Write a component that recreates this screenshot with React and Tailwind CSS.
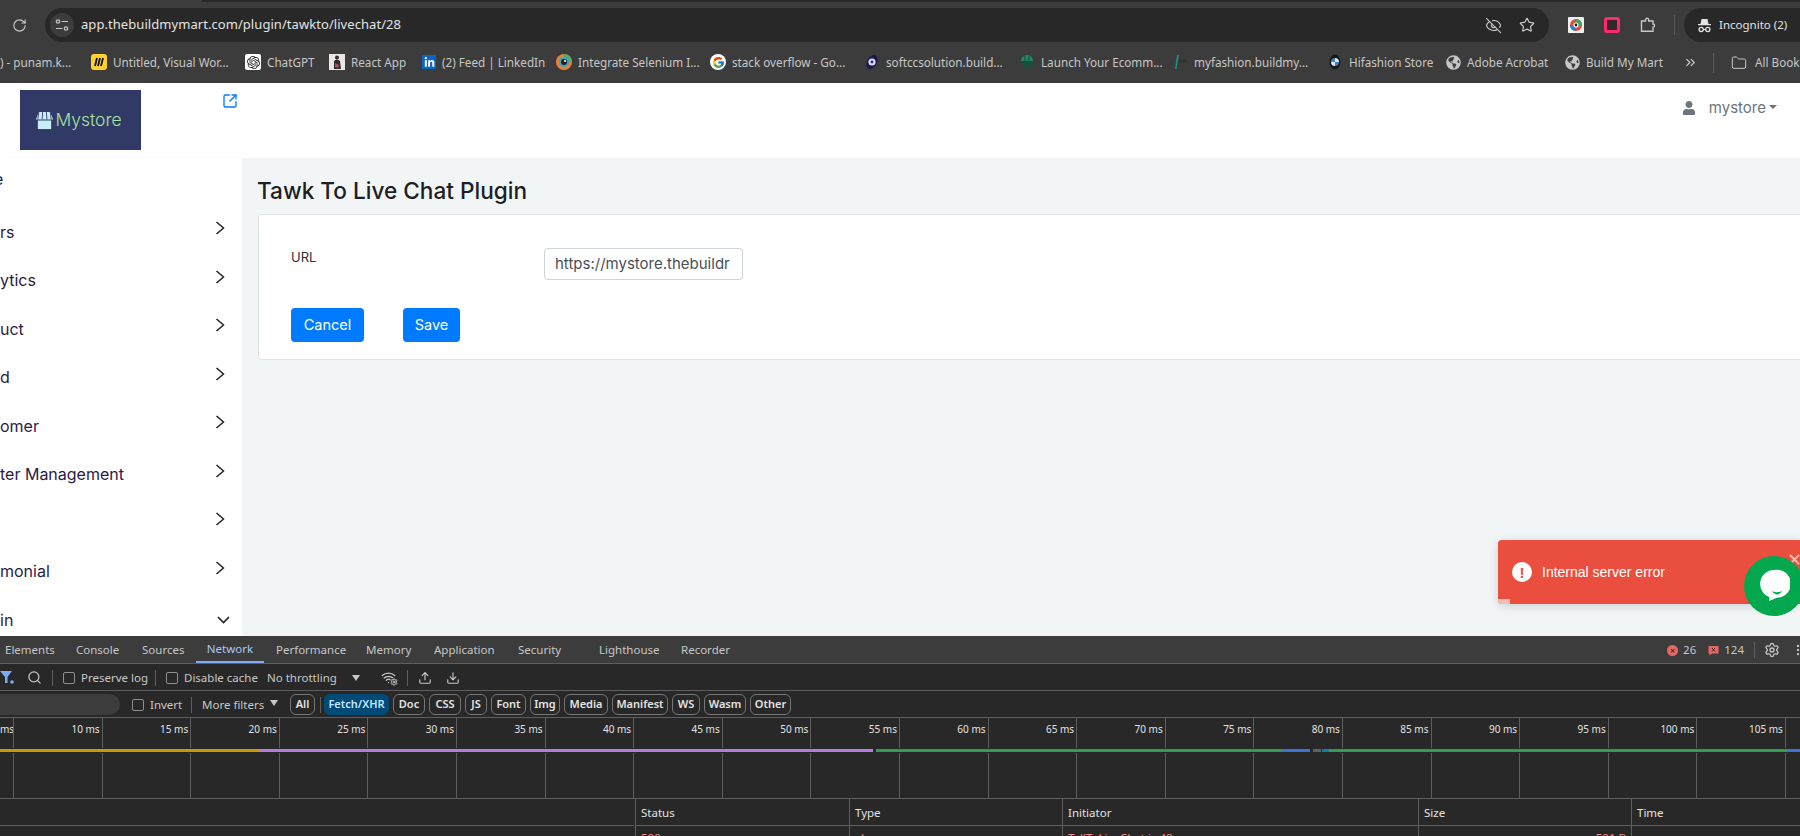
import React from 'react';
import {
  ChevronsRight,
  EyeOff,
  Folder,
  MoreVertical,
  RotateCw,
  Search,
  Settings,
  SquareArrowOutUpRight,
  Star,
  Upload,
  Download,
  Wifi,
} from 'lucide-react';
import { FaGlobeAmericas, FaLinkedinIn, FaUser } from 'react-icons/fa';
import { FcGoogle } from 'react-icons/fc';
import { SiOpenai } from 'react-icons/si';

const chromeFont = "font-['Noto_Sans',sans-serif]";
const pageFont = "font-['Inter',sans-serif]";

function Miro() {
  return (
    <svg width="16" height="16" viewBox="0 0 16 16">
      <rect width="16" height="16" rx="3" fill="#ffd02f" />
      <path d="M4 12 L6 4 M7 12 L9 4 M10 12 L12 4" stroke="#111" strokeWidth="1.8" />
    </svg>
  );
}

function OpenAi() {
  return (
    <span className="w-4 h-4 bg-white rounded-[2px] flex items-center justify-center">
      <SiOpenai size={13} color="#222" />
    </span>
  );
}

function Photo() {
  return (
    <svg width="16" height="16" viewBox="0 0 16 16">
      <rect width="16" height="16" fill="#e9e6e4" />
      <circle cx="8" cy="3.5" r="2" fill="#3a2a2a" />
      <path d="M5 7 Q8 4 11 7 L12 15 H5 Z" fill="#33292c" />
      <path d="M6 9 L10 11 L9 14 L6 13 Z" fill="#a3525c" />
    </svg>
  );
}

function LinkedIn() {
  return (
    <span className="w-[14px] h-[14px] bg-[#0a66c2] flex items-center justify-center">
      <FaLinkedinIn size={11} color="#fff" />
    </span>
  );
}

function Lens() {
  return (
    <svg width="16" height="16" viewBox="0 0 16 16">
      <circle cx="8" cy="8" r="8" fill="#e9803a" />
      <path d="M8 0 A8 8 0 0 1 16 8 L12 8 A4 4 0 0 0 8 4 Z" fill="#4fae6a" />
      <circle cx="8" cy="8" r="5" fill="#31a7c4" />
      <circle cx="8" cy="8" r="3" fill="#222" />
      <circle cx="9" cy="7" r="1" fill="#fff" />
    </svg>
  );
}

function Google() {
  return (
    <span className="w-4 h-4 bg-white rounded-full flex items-center justify-center">
      <FcGoogle size={13} />
    </span>
  );
}

function Swirl() {
  return (
    <svg width="16" height="16" viewBox="0 0 16 16">
      <ellipse cx="8" cy="8" rx="5" ry="7.5" fill="#1b1a4a" transform="rotate(30 8 8)" />
      <circle cx="8" cy="8" r="3.6" fill="#d8dcf5" />
      <circle cx="8" cy="8" r="1.4" fill="#2a2a7a" />
    </svg>
  );
}

function Basket() {
  return (
    <svg width="16" height="16" viewBox="0 0 16 16">
      <path d="M2 7 A6 6 0 0 1 14 7 Z" fill="#1f8a62" />
      <path d="M3 8 H13 L11 14 H5 Z" fill="#14523e" />
      <path d="M6 2 V7 M10 2 V7" stroke="#2f2f2f" strokeWidth="0.8" />
    </svg>
  );
}

function Fashion() {
  return (
    <svg width="16" height="16" viewBox="0 0 16 16">
      <path d="M5 1 L3 15 L4.5 15 L7 1 Z" fill="#1f8c8c" />
      <rect x="7" y="5.5" width="8" height="3" fill="#333" />
    </svg>
  );
}

function Bmw() {
  return (
    <svg width="16" height="16" viewBox="0 0 16 16">
      <ellipse cx="8" cy="8" rx="5.5" ry="7.5" fill="#16181c" />
      <path d="M8 4 A4 4 0 0 1 12 8 H8 Z M8 8 H4 A4 4 0 0 0 8 12 Z" fill="#dfe6ee" />
      <path d="M8 4 A4 4 0 0 0 4 8 H8 Z M8 8 H12 A4 4 0 0 1 8 12 Z" fill="#3f7fc1" />
    </svg>
  );
}

function Globe() {
  return <FaGlobeAmericas size={15} color="#c7c7c7" />;
}

const bookmarks = [
  { label: ') - punam.k...', cls: 'w-[91px]' },
  { label: 'Untitled, Visual Wor...', icon: <Miro />, cls: 'w-[154px]' },
  { label: 'ChatGPT', icon: <OpenAi />, cls: 'w-[84px]' },
  { label: 'React App', icon: <Photo />, cls: 'w-[93px]' },
  { label: '(2) Feed | LinkedIn', icon: <LinkedIn />, cls: 'w-[134px]' },
  { label: 'Integrate Selenium I...', icon: <Lens />, cls: 'w-[154px]' },
  { label: 'stack overflow - Go...', icon: <Google />, cls: 'w-[154px]' },
  { label: 'softccsolution.build...', icon: <Swirl />, cls: 'w-[155px]' },
  { label: 'Launch Your Ecomm...', icon: <Basket />, cls: 'w-[153px]' },
  { label: 'myfashion.buildmy...', icon: <Fashion />, cls: 'w-[155px]' },
  { label: 'Hifashion Store', icon: <Bmw />, cls: 'w-[119px]' },
  { label: 'Adobe Acrobat', icon: <Globe />, cls: 'w-[119px]' },
  { label: 'Build My Mart', icon: <Globe />, cls: 'w-[118px]' },
];

function BrowserBar() {
  return (
    <div className={`${chromeFont} shrink-0`}>
      <div className="flex h-[2px] bg-[#3c3c3c]">
        <div className="w-[202px]" />
        <div className="flex-1 bg-[#282828]" />
      </div>
      <div className="flex items-center h-[40px] pt-[6px] bg-[#3c3c3c] text-[#e3e3e3]">
        <div className="w-[26px] shrink-0 flex justify-center ml-[1px]">
          <RotateCw size={15} color="#c7c7c7" strokeWidth={1.8} className="ml-[10px]" />
        </div>
        <div className="ml-[18px] flex items-center h-[34px] w-[1504px] shrink-0 bg-[#282828] rounded-full">
          <span className="ml-[5px] w-[24px] h-[24px] rounded-full bg-[#3c3c3c] flex items-center justify-center">
            <svg width="14" height="14" viewBox="0 0 14 14" fill="none" stroke="#c7c7c7" strokeWidth="1.2">
              <circle cx="3" cy="3.5" r="1.7" />
              <path d="M6.5 3.5 H13 M1 10.5 H7.5" />
              <circle cx="11" cy="10.5" r="1.7" />
            </svg>
          </span>
          <span className="ml-[7px] text-[13px] text-[#e3e3e3] tracking-[0.06px]">app.thebuildmymart.com/plugin/tawkto/livechat/28</span>
          <div className="ml-auto flex items-center gap-[17px] pr-[14px]">
            <EyeOff size={17} color="#c7c7c7" strokeWidth={1.6} />
            <Star size={16} color="#c7c7c7" strokeWidth={1.8} />
          </div>
        </div>
        <div className="ml-[19px] flex items-center w-[107px] shrink-0">
          <svg width="16" height="16" viewBox="0 0 16 16">
            <rect width="16" height="16" rx="1" fill="#eef2f2" />
            <circle cx="8" cy="8" r="6" fill="#e94b35" />
            <path d="M8 2 A6 6 0 0 1 14 8 L8 8 Z" fill="#3ba55c" />
            <path d="M8 14 A6 6 0 0 1 2 8 L8 8 Z" fill="#2a7fd5" />
            <circle cx="8" cy="8" r="2.6" fill="#fff" />
            <circle cx="8" cy="8" r="1.4" fill="#222" />
          </svg>
          <span className="ml-[20px] w-[16px] h-[16px] rounded-[3px] border-[3px] border-[#ff2a6d] bg-[#33262c]" />
          <svg className="ml-[20px]" width="17" height="16" viewBox="0 0 17 16" fill="none" stroke="#c7c7c7" strokeWidth="1.4">
            <path d="M1.5 4 H5.5 V2.8 A1.6 1.6 0 0 1 8.7 2.8 V4 H13 V7 A1.6 1.6 0 0 1 13 10.2 V14.3 H1.5 Z" />
          </svg>
        </div>
        <span className="w-px h-[20px] bg-[#5a5a5a] shrink-0 -ml-[1px]" />
        <div className="ml-[9px] flex items-center h-[34px] flex-1 bg-[#282828] rounded-l-full">
          <svg className="ml-[13px]" width="15" height="15" viewBox="0 0 15 15" fill="#e3e3e3">
            <path d="M4.5 1 H10.5 L11.5 6 H14 V7.2 H1 V6 H3.5 Z" />
            <circle cx="4.2" cy="11.5" r="2.1" fill="none" stroke="#e3e3e3" strokeWidth="1.3" />
            <circle cx="10.8" cy="11.5" r="2.1" fill="none" stroke="#e3e3e3" strokeWidth="1.3" />
            <path d="M6.3 11.5 H8.7" stroke="#e3e3e3" strokeWidth="1" />
          </svg>
          <span className="ml-[7px] text-[11.5px] text-[#e3e3e3] whitespace-nowrap">Incognito (2)</span>
        </div>
      </div>
      <div className="flex items-center h-[41px] bg-[#3c3c3c] text-[#c7c7c7] text-[11.7px] whitespace-nowrap overflow-hidden">
        {bookmarks.map((b) => (
          <div key={b.label} className={`${b.cls} shrink-0 flex items-center gap-[6px]`}>
            {b.icon}
            <span>{b.label}</span>
          </div>
        ))}
        <ChevronsRight size={15} color="#c7c7c7" className="shrink-0" />
        <span className="ml-[15px] w-px h-[20px] bg-[#5a5a5a] shrink-0" />
        <Folder size={16} color="#c7c7c7" strokeWidth={1.5} className="ml-[17px] shrink-0" />
        <span className="ml-[8px]">All Bookmarks</span>
      </div>
    </div>
  );
}

const navItems = [
  { label: 'e', cls: 'h-[50px] pb-[8px] -ml-[6px]', plain: true },
  { label: 'rs', cls: 'h-[48.5px]' },
  { label: 'ytics', cls: 'h-[48.5px]' },
  { label: 'uct', cls: 'h-[48.5px]' },
  { label: 'd', cls: 'h-[48.5px]' },
  { label: 'omer', cls: 'h-[48.5px]' },
  { label: 'ter Management', cls: 'h-[48.5px]' },
  { label: '', cls: 'h-[48.5px]' },
  { label: 'monial', cls: 'h-[48.5px]' },
];

function Sidebar() {
  return (
    <div className="w-[242px] shrink-0 bg-white overflow-hidden shadow-[2px_0_6px_rgba(0,0,0,0.03)] text-[16px] text-[#2b1a48]">
      {navItems.map((item) => (
        <div key={item.label + item.cls} className={`${item.cls} flex items-center justify-between pr-[17px]`}>
          <span className="mb-[1px]">{item.label}</span>
          {!item.plain && (
            <svg className="mb-[8px]" width="10" height="14" viewBox="0 0 10 14" fill="none" stroke="#222" strokeWidth="1.5">
              <path d="M1.5 1 L8.5 7 L1.5 13" />
            </svg>
          )}
        </div>
      ))}
      <div className="flex items-center justify-between pr-[12px] h-[40px] pt-[8px]">
        <span>in</span>
        <svg width="13" height="8" viewBox="0 0 13 8" fill="none" stroke="#222" strokeWidth="1.6">
          <path d="M1 1 L6.5 6.5 L12 1" />
        </svg>
      </div>
    </div>
  );
}

function PageArea() {
  return (
    <div className={`${pageFont} flex-1 min-h-0 flex flex-col bg-white overflow-hidden`}>
      <div className="h-[75px] shrink-0 flex items-start">
        <div className="ml-[20px] mt-[7px] w-[121px] h-[60px] pr-[4px] bg-[#313a66] flex items-center justify-center gap-[1px]">
          <svg width="19" height="19" viewBox="0 0 20 20">
            <path d="M4 1 H16 L19 9 H1 Z" fill="#c8eef5" />
            <path d="M4 1 L3 9 M8 1 L7.5 9 M12 1 L12.5 9 M16 1 L17 9" stroke="#313a66" strokeWidth="0.9" />
            <rect x="3" y="10" width="14" height="9" fill="#c8eef5" />
          </svg>
          <span className="text-[17.5px] font-light text-[#a6e3a1] leading-none">Mystore</span>
        </div>
        <SquareArrowOutUpRight size={16} color="#007bff" strokeWidth={2} className="ml-[81px] mt-[10px]" />
        <div className="ml-auto mr-[23px] mt-[14px] flex items-center text-[15px] text-[#6c757d]">
          <FaUser size={14} color="#6c757d" />
          <span className="ml-[13px]">mystore</span>
          <span className="ml-[3px] mb-[2px] border-x-[4px] border-x-transparent border-t-[4px] border-t-[#6c757d]" />
        </div>
      </div>
      <div className="flex flex-1 min-h-0">
        <Sidebar />
        <div className="flex-1 min-w-0 bg-[#f1f5f6] pl-[16px]">
          <h1 className="-ml-[1px] mt-[19px] h-[27px] leading-[27px] text-[22.6px] font-medium text-[#1e1e24]">Tawk To Live Chat Plugin</h1>
          <div className="mt-[10px] -mr-[20px] h-[146px] bg-white border border-[#dfe3e6] rounded-[4px] pt-[32px] pl-[32px]">
            <div className="flex items-start">
              <label className="w-[253px] mt-[1px] text-[13px] leading-[18px] text-[#2f2f36]">URL</label>
              <div className="mt-[1px] w-[199px] h-[32px] pl-[10px] bg-white border border-[#ced4da] rounded-[4px] text-[15px] leading-[30px] text-[#495057] overflow-hidden whitespace-nowrap">
                https://mystore.thebuildr
              </div>
            </div>
            <div className="mt-[28px] flex gap-[39px]">
              <button className="w-[73px] h-[34px] bg-[#007bff] text-white text-[14.5px] rounded-[4px]">Cancel</button>
              <button className="w-[57px] h-[34px] bg-[#007bff] text-white text-[14.5px] rounded-[4px]">Save</button>
            </div>
          </div>
        </div>
      </div>
    </div>
  );
}

const tabs = [
  { label: 'Elements', cls: 'ml-[5px] w-[71px]' },
  { label: 'Console', cls: 'w-[66px]' },
  { label: 'Sources', cls: 'w-[66px]' },
  { label: 'Performance', cls: 'w-[90px]' },
  { label: 'Memory', cls: 'w-[68px]' },
  { label: 'Application', cls: 'w-[84px]' },
  { label: 'Security', cls: 'w-[81px]' },
  { label: 'Lighthouse', cls: 'w-[82px]' },
  { label: 'Recorder', cls: 'w-[60px]' },
];

const pills = [
  { label: 'Doc', cls: 'w-[32px] ml-[4px]' },
  { label: 'CSS', cls: 'w-[32px] ml-[4px]' },
  { label: 'JS', cls: 'w-[22px] ml-[4px]' },
  { label: 'Font', cls: 'w-[35px] ml-[4px]' },
  { label: 'Img', cls: 'w-[30px] ml-[4px]' },
  { label: 'Media', cls: 'w-[44px] ml-[4px]' },
  { label: 'Manifest', cls: 'w-[56px] ml-[4px]' },
  { label: 'WS', cls: 'w-[28px] ml-[4px]' },
  { label: 'Wasm', cls: 'w-[42px] ml-[4px]' },
  { label: 'Other', cls: 'w-[41px] ml-[4px]' },
];

const ticks = ['10 ms', '15 ms', '20 ms', '25 ms', '30 ms', '35 ms', '40 ms', '45 ms', '50 ms', '55 ms', '60 ms', '65 ms', '70 ms', '75 ms', '80 ms', '85 ms', '90 ms', '95 ms', '100 ms', '105 ms'];

const segments = [
  { cls: 'w-[260px] bg-[#c99a06]' },
  { cls: 'w-[613px] bg-[#b57ddb]' },
  { cls: 'w-[3px]' },
  { cls: 'w-[405px] bg-[#2f9e54]' },
  { cls: 'w-[29px] bg-[#3f72d9]' },
  { cls: 'w-[3px]' },
  { cls: 'w-[8px] bg-[#5f6368]' },
  { cls: 'w-[1px]' },
  { cls: 'w-[7px] bg-[#0b7fa8]' },
  { cls: 'w-[458px] bg-[#2f9e54]' },
  { cls: 'w-[13px] bg-[#3f72d9]' },
];

const columns = [
  { label: 'Status', value: '500', cls: 'w-[214px]', valueCls: 'text-[#f28b82]' },
  { label: 'Type', value: 'xhr', cls: 'w-[213px]', valueCls: 'text-[#f28b82]' },
  { label: 'Initiator', value: 'TellToLiveChat.js:48', cls: 'w-[356px]', valueCls: 'text-[#f28b82]' },
  { label: 'Size', value: '591 B', cls: 'w-[213px]', valueCls: 'text-[#f28b82] text-right pr-[5px]' },
  { label: 'Time', value: '', cls: 'flex-1', valueCls: '' },
];

function Checkbox({ className }) {
  return <span className={`w-[12px] h-[12px] rounded-[2px] border border-[#8e8e8e] shrink-0 ${className}`} />;
}

function DevTools() {
  return (
    <div className={`${chromeFont} h-[200px] shrink-0 bg-[#282828] text-[11.5px] text-[#c7c7c7] whitespace-nowrap overflow-hidden`}>
      <div className="h-[28px] pt-[1px] flex items-center bg-[#3c3c3c] border-b border-[#5e5e5e]">
        {tabs.slice(0, 3).map((t) => (
          <span key={t.label} className={`${t.cls} shrink-0`}>{t.label}</span>
        ))}
        <span className="w-[68px] -ml-[12px] mr-[12px] h-full shrink-0 flex items-center justify-center text-[#a8c7fa] border-b-2 border-[#7cacf8]">Network</span>
        {tabs.slice(3).map((t) => (
          <span key={t.label} className={`${t.cls} shrink-0`}>{t.label}</span>
        ))}
        <div className="ml-auto flex items-center">
          <span className="w-[11px] h-[11px] rounded-full bg-[#e46962] flex items-center justify-center text-[9px] leading-none text-[#3c1010]">×</span>
          <span className="ml-[5px]">26</span>
          <svg className="ml-[12px]" width="11" height="11" viewBox="0 0 11 11">
            <path d="M0.5 1 H10.5 V8.5 H4 L1.5 10.5 V8.5 H0.5 Z" fill="#e46962" />
            <path d="M4 3 L7 6.5 M7 3 L4 6.5" stroke="#3c1010" strokeWidth="0.9" />
          </svg>
          <span className="ml-[5px]">124</span>
          <span className="ml-[10px] w-px h-[16px] bg-[#5e5e5e]" />
          <Settings size={16} color="#c7c7c7" className="ml-[9px]" />
          <MoreVertical size={14} color="#c7c7c7" className="ml-[11px] -mr-[5px]" />
        </div>
      </div>
      <div className="h-[27px] pt-[1px] flex items-center border-b border-[#5e5e5e]">
        <svg width="15" height="15" viewBox="0 0 15 15" fill="#7cacf8" className="shrink-0">
          <path d="M0 1 H12 L7.5 7 V13 H5 V7 Z" />
          <circle cx="12" cy="12" r="1.8" />
        </svg>
        <Search size={15} color="#c7c7c7" className="ml-[12px] shrink-0" />
        <span className="ml-[10px] w-px h-[16px] bg-[#5e5e5e]" />
        <Checkbox className="ml-[10px]" />
        <span className="ml-[6px] w-[65px]">Preserve log</span>
        <span className="ml-[9px] w-px h-[16px] bg-[#5e5e5e]" />
        <Checkbox className="ml-[10px]" />
        <span className="ml-[6px] w-[72px]">Disable cache</span>
        <span className="ml-[11px] w-[69px]">No throttling</span>
        <span className="ml-[16px] border-x-[4px] border-x-transparent border-t-[6px] border-t-[#c7c7c7]" />
        <span className="relative ml-[21px] w-[17px] h-[16px]">
          <Wifi size={15} color="#c7c7c7" />
          <Settings size={8} color="#c7c7c7" strokeWidth={3} className="absolute right-0 bottom-0 bg-[#282828] rounded-full" />
        </span>
        <span className="ml-[9px] w-px h-[16px] bg-[#5e5e5e]" />
        <Upload size={14} color="#c7c7c7" className="ml-[10px]" />
        <Download size={14} color="#c7c7c7" className="ml-[14px]" />
      </div>
      <div className="h-[27px] pt-[1px] flex items-center border-b border-[#5e5e5e]">
        <span className="w-[120px] h-[21px] shrink-0 bg-[#3c3c3c] rounded-r-full" />
        <Checkbox className="ml-[12px]" />
        <span className="ml-[6px] w-[30px]">Invert</span>
        <span className="ml-[11px] w-px h-[16px] bg-[#5e5e5e]" />
        <span className="ml-[10px] w-[60px]">More filters</span>
        <span className="ml-[8px] border-x-[4px] border-x-transparent border-t-[6px] border-t-[#c7c7c7] mb-[3px]" />
        <span className="ml-[12px] w-[25px] h-[21px] rounded-[6px] border border-[#757575] flex items-center justify-center font-semibold text-[11px] text-[#e3e3e3]">All</span>
        <span className="ml-[5px] w-px h-[16px] bg-[#5e5e5e]" />
        <span className="ml-[3px] w-[65px] h-[21px] rounded-[6px] bg-[#004a77] flex items-center justify-center font-semibold text-[11px] text-[#c2e7ff]">Fetch/XHR</span>
        {pills.map((p) => (
          <span key={p.label} className={`${p.cls} h-[21px] rounded-[6px] border border-[#757575] flex items-center justify-center font-semibold text-[11px] text-[#e3e3e3]`}>
            {p.label}
          </span>
        ))}
      </div>
      <div className="h-[30px] flex text-[10px] leading-[22px] text-[#e3e3e3]">
        <div className="w-[14px] shrink-0 border-r border-[#5e5e5e] text-right overflow-hidden">ms</div>
        {ticks.map((t) => (
          <div key={t} className="w-[88.6px] shrink-0 border-r border-[#5e5e5e] text-right pr-[2px]">{t}</div>
        ))}
      </div>
      <div className="h-[5px] flex items-center">
        {segments.map((s, i) => (
          <div key={i} className={`${s.cls} h-[3px] shrink-0`} />
        ))}
      </div>
      <div className="h-[46px] flex border-b border-[#5e5e5e]">
        <div className="w-[14px] shrink-0 border-r border-[#5e5e5e]" />
        {ticks.map((t) => (
          <div key={t} className="w-[88.6px] shrink-0 border-r border-[#5e5e5e]" />
        ))}
      </div>
      <div className="flex">
        <div className="w-[635px] shrink-0 border-r border-transparent">
          <div className="h-[27px] border-b border-[#5e5e5e]" />
        </div>
        {columns.map((c) => (
          <div key={c.label} className={`${c.cls} shrink-0 border-l border-[#5e5e5e]`}>
            <div className="h-[27px] leading-[27px] pl-[5px] border-b border-[#5e5e5e] text-[#e3e3e3]">{c.label}</div>
            <div className={`h-[24px] leading-[24px] pl-[5px] ${c.valueCls}`}>{c.value}</div>
          </div>
        ))}
      </div>
    </div>
  );
}

function Toast() {
  return (
    <div className="absolute left-[1498px] top-[540px] w-[302px] h-[64px] bg-[#e94e3e] rounded-l-[4px] shadow-[0_2px_10px_rgba(0,0,0,0.15)] flex items-center pl-[14px] font-['Liberation_Sans',sans-serif] text-[14px] text-white overflow-hidden">
      <span className="w-[20px] h-[20px] rounded-full bg-white flex items-center justify-center text-[#e94e3e] font-bold text-[15px] leading-none">!</span>
      <span className="ml-[10px]">Internal server error</span>
      <span className="absolute -right-[2px] top-[11px] text-[#f6bdb6] text-[18px] leading-none">✕</span>
      <span className="absolute left-0 bottom-0 w-[12px] h-[5px] bg-[#f6bdb6]" />
    </div>
  );
}

function ChatBubble() {
  return (
    <div className="absolute left-[1744px] top-[556px] w-[60px] h-[60px] rounded-full bg-[#03a84e] flex items-center justify-center">
      <svg width="32" height="34" viewBox="0 0 32 34">
        <path d="M16 1 A14 14 0 1 1 19 28.7 L11 32 L11.5 28.2 A14 14 0 0 1 16 1 Z" fill="#fff" />
        <path d="M14 22 Q19 24.5 24 22 Q22 26 18.5 25.5 Q15.5 25 14 22 Z" fill="#03a84e" />
      </svg>
    </div>
  );
}

export default function App() {
  return (
    <div className="relative w-[1800px] h-[836px] flex flex-col overflow-hidden bg-white">
      <BrowserBar />
      <PageArea />
      <DevTools />
      <Toast />
      <ChatBubble />
    </div>
  );
}
